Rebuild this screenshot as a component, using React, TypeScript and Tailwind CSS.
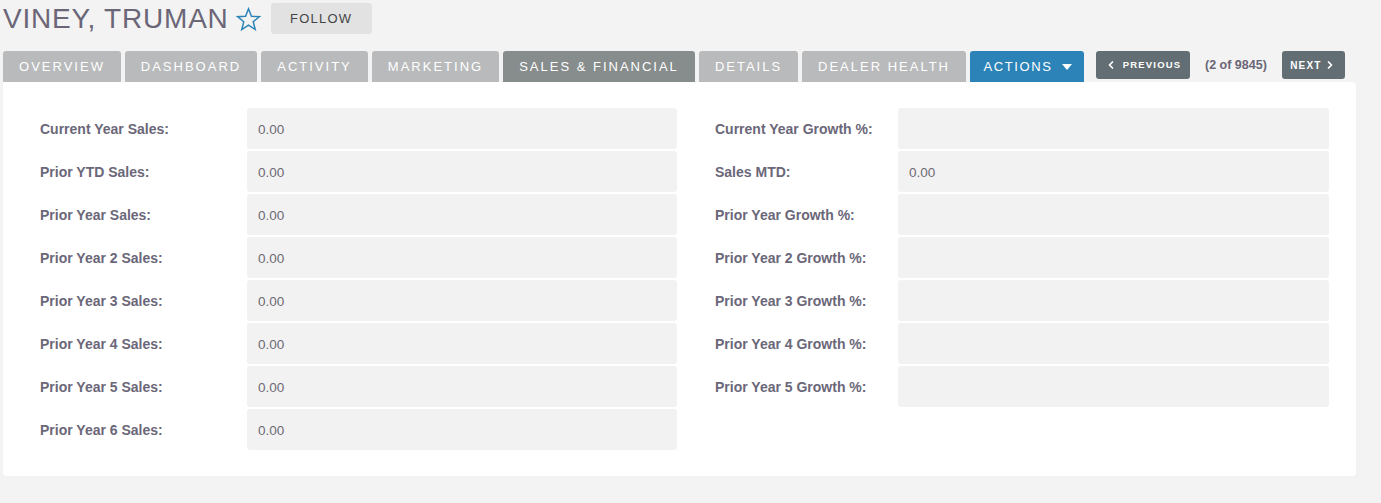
import { ChevronLeft, ChevronRight } from 'lucide-react'

const tabs = [
  { label: 'OVERVIEW', w: 'w-[118px]' },
  { label: 'DASHBOARD', w: 'w-[132px]' },
  { label: 'ACTIVITY', w: 'w-[107px]' },
  { label: 'MARKETING', w: 'w-[127px]' },
  { label: 'SALES & FINANCIAL', w: 'w-[192px]', active: true },
  { label: 'DETAILS', w: 'w-[99px]' },
  { label: 'DEALER HEALTH', w: 'w-[164px]' },
]

const leftRows = [
  ['Current Year Sales:', '0.00'],
  ['Prior YTD Sales:', '0.00'],
  ['Prior Year Sales:', '0.00'],
  ['Prior Year 2 Sales:', '0.00'],
  ['Prior Year 3 Sales:', '0.00'],
  ['Prior Year 4 Sales:', '0.00'],
  ['Prior Year 5 Sales:', '0.00'],
  ['Prior Year 6 Sales:', '0.00'],
]

const rightRows = [
  ['Current Year Growth %:', ''],
  ['Sales MTD:', '0.00'],
  ['Prior Year Growth %:', ''],
  ['Prior Year 2 Growth %:', ''],
  ['Prior Year 3 Growth %:', ''],
  ['Prior Year 4 Growth %:', ''],
  ['Prior Year 5 Growth %:', ''],
]

function Field({ label, value, labelW, boxW }: { label: string; value: string; labelW: string; boxW: string }) {
  return (
    <div className="flex h-[41px] items-center">
      <div className={`${labelW} shrink-0 pt-[2px] text-[14px] font-bold text-[#6b6779]`}>{label}</div>
      <div className={`${boxW} flex h-full items-center rounded-[3px] bg-[#f2f2f2] px-[11px] pt-[4px] text-[13.5px] text-[#6e6a74]`}>
        {value}
      </div>
    </div>
  )
}

export default function App() {
  return (
    <div className="min-h-[503px] bg-[#f3f3f3] pl-[3px] pt-[3px] font-['Liberation_Sans',Arial,sans-serif]">
      <div className="flex h-[31px] items-center">
        <h1 className="text-[28px] leading-none tracking-[0.8px] text-[#6b6677]">VINEY, TRUMAN</h1>
        <svg className="ml-[5px] mt-[2px]" width="29" height="27" viewBox="0 0 24 24" fill="none" stroke="#2b83b7" strokeWidth="1.3" strokeLinejoin="miter">
          <path d="M12 2.5l2.6 6.6 7.1.4-5.5 4.5 1.8 6.9L12 17l-6 3.9 1.8-6.9-5.5-4.5 7.1-.4z" />
        </svg>
        <button className="ml-[8px] h-[31px] w-[101px] rounded-[3px] bg-[#e2e2e2] text-[13px] tracking-[1.2px] text-[#444]">
          FOLLOW
        </button>
      </div>

      <div className="mt-[17px] flex items-end">
        <div className="flex gap-[4px]">
          {tabs.map((t) => (
            <div
              key={t.label}
              className={`${t.w} flex h-[31px] items-center justify-center rounded-t-[3px] text-[13px] tracking-[2px] text-white ${
                t.active ? 'bg-[#878c8c]' : 'bg-[#b9babb]'
              }`}
            >
              {t.label}
            </div>
          ))}
          <div className="flex h-[31px] w-[114px] items-center justify-center gap-[10px] rounded-t-[3px] bg-[#2b83b7] pl-[2px] text-[13px] tracking-[1.6px] text-white">
            ACTIONS
            <svg width="10" height="6" viewBox="0 0 10 6">
              <path d="M0 0h10L5 6z" fill="white" />
            </svg>
          </div>
        </div>
        <div className="mb-[3px] ml-[12px] flex items-center self-start">
          <button className="flex h-[28px] w-[94px] items-center justify-center gap-[6px] rounded-[3px] bg-[#636e74] text-[9.5px] font-bold tracking-[1.2px] text-white">
            <ChevronLeft size={12} strokeWidth={3.5} />
            PREVIOUS
          </button>
          <span className="ml-[15px] text-[12.5px] font-bold text-[#6b6677]">(2 of 9845)</span>
          <button className="ml-[15px] flex h-[28px] w-[63px] items-center justify-center gap-[3px] rounded-[3px] bg-[#636e74] text-[10px] font-bold tracking-[1.1px] text-white">
            NEXT
            <ChevronRight size={12} strokeWidth={3.5} />
          </button>
        </div>
      </div>

      <div className="flex w-[1353px] gap-[38px] rounded-b-[4px] rounded-tr-[4px] bg-white pb-[26px] pl-[37px] pt-[26px]">
        <div className="flex flex-col gap-[2px]">
          {leftRows.map(([l, v]) => (
            <Field key={l} label={l} value={v} labelW="w-[207px]" boxW="w-[430px]" />
          ))}
        </div>
        <div className="flex flex-col gap-[2px]">
          {rightRows.map(([l, v]) => (
            <Field key={l} label={l} value={v} labelW="w-[183px]" boxW="w-[431px]" />
          ))}
        </div>
      </div>
    </div>
  )
}
